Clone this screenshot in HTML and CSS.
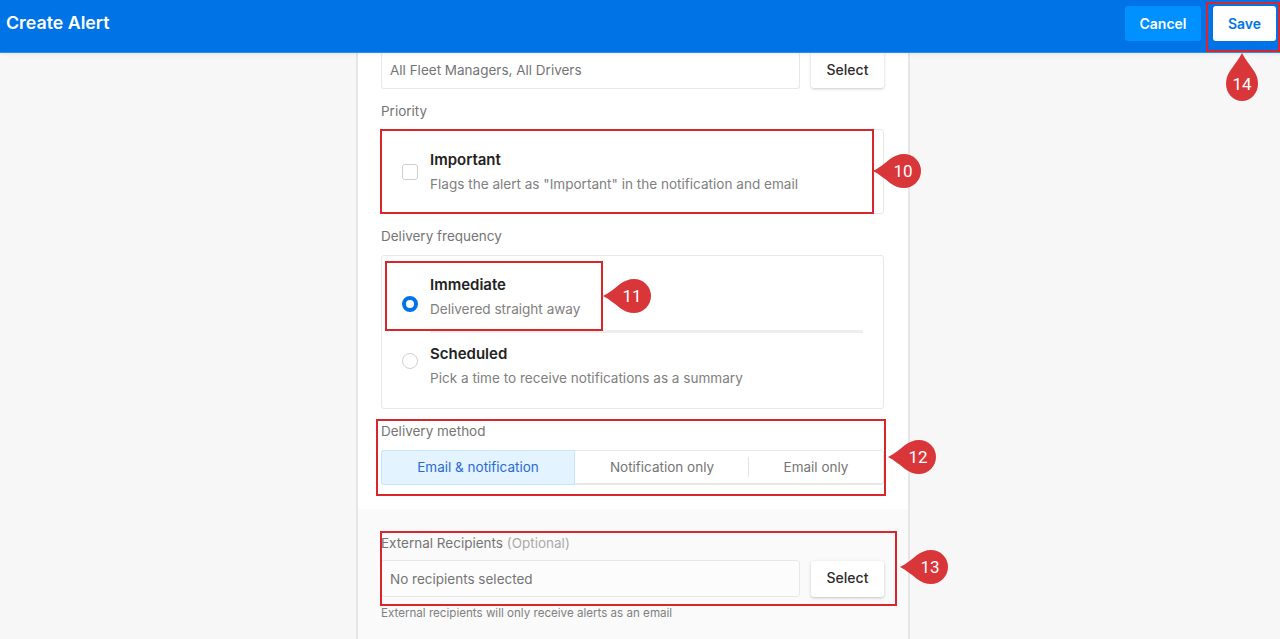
FILE: index.html
```html
<!DOCTYPE html>
<html lang="en">
<head>
<meta charset="utf-8">
<title>Create Alert</title>
<link rel="stylesheet" href="styles.css">
</head>
<body>
<header class="topbar">
  <h1 class="topbar-title">Create Alert</h1>
  <div class="topbar-actions">
    <button class="btn-cancel">Cancel</button>
    <button class="btn-save">Save</button>
  </div>
</header>
<main class="page">
  <div class="panel">
    <section class="panel-main">
      <div class="picker picker-cut">
        <div class="picker-value">All Fleet Managers, All Drivers</div>
        <button class="btn-select">Select</button>
      </div>
      <div class="label label-priority">Priority</div>
      <div class="card card-priority">
        <div class="option">
          <span class="checkbox"></span>
          <div>
            <div class="option-title">Important</div>
            <div class="option-desc">Flags the alert as "Important" in the notification and email</div>
          </div>
        </div>
      </div>
      <div class="label label-frequency">Delivery frequency</div>
      <div class="card card-frequency">
        <div class="option option-immediate">
          <span class="radio radio-on"></span>
          <div>
            <div class="option-title">Immediate</div>
            <div class="option-desc">Delivered straight away</div>
          </div>
        </div>
        <div class="rule"></div>
        <div class="option option-scheduled">
          <span class="radio"></span>
          <div>
            <div class="option-title">Scheduled</div>
            <div class="option-desc">Pick a time to receive notifications as a summary</div>
          </div>
        </div>
      </div>
      <div class="label label-method">Delivery method</div>
      <div class="segments">
        <div class="segment segment-active">Email &amp; notification</div>
        <div class="segment segment-notif">Notification only</div>
        <div class="segment segment-email">Email only</div>
      </div>
    </section>
    <section class="panel-external">
      <div class="label label-external">External Recipients <span class="optional">(Optional)</span></div>
      <div class="picker">
        <div class="picker-value picker-empty">No recipients selected</div>
        <button class="btn-select">Select</button>
      </div>
      <p class="help">External recipients will only receive alerts as an email</p>
    </section>
  </div>
</main>

<div class="mark mark-10"></div>
<div class="mark mark-11"></div>
<div class="mark mark-12"></div>
<div class="mark mark-13"></div>
<div class="mark mark-14"></div>

<svg class="pin pin-10" viewBox="0 0 48 34"><path d="M0 17C6 14 12 9 17 5C21 2 26 0 31 0A17 17 0 0 1 31 34C26 34 21 32 17 29C12 25 6 20 0 17Z"/><text x="30" y="23">10</text></svg>
<svg class="pin pin-11" viewBox="0 0 48 34"><path d="M0 17C6 14 12 9 17 5C21 2 26 0 31 0A17 17 0 0 1 31 34C26 34 21 32 17 29C12 25 6 20 0 17Z"/><text x="29" y="23">11</text></svg>
<svg class="pin pin-12" viewBox="0 0 48 34"><path d="M0 17C6 14 12 9 17 5C21 2 26 0 31 0A17 17 0 0 1 31 34C26 34 21 32 17 29C12 25 6 20 0 17Z"/><text x="30" y="23">12</text></svg>
<svg class="pin pin-13" viewBox="0 0 48 34"><path d="M0 17C6 14 12 9 17 5C21 2 26 0 31 0A17 17 0 0 1 31 34C26 34 21 32 17 29C12 25 6 20 0 17Z"/><text x="30" y="23">13</text></svg>
<svg class="pin pin-14" viewBox="0 0 34 48"><path d="M17 0C20 6 25 12 29 18C32 22 33 27 33 31A16 17 0 0 1 1 31C1 27 2 22 5 18C9 12 14 6 17 0Z"/><text x="17" y="37">14</text></svg>
</body>
</html>
```
FILE: styles.css
```css
* { box-sizing: border-box; }

html, body {
  margin: 0;
  height: 100%;
  overflow: hidden;
}

body {
  position: relative;
  background: #f7f7f7;
  font-family: Inter, "Liberation Sans", sans-serif;
  font-size: 13.5px;
  color: #757575;
}

button {
  font-family: inherit;
  cursor: pointer;
}

.topbar {
  position: relative;
  z-index: 2;
  height: 53px;
  padding: 6px 4px 0 6px;
  display: flex;
  justify-content: space-between;
  align-items: flex-start;
  background: #0074e6;
  border-bottom: 1px solid #2b8cec;
  box-shadow: 0 1px 4px rgba(0, 0, 0, 0.08);
}

.topbar-title {
  margin: 6px 0 0;
  font-size: 17.8px;
  line-height: 22px;
  font-weight: 600;
  color: #fff;
}

.topbar-actions {
  display: flex;
  gap: 12px;
}

.btn-cancel,
.btn-save {
  height: 35px;
  border: 0;
  border-radius: 3px;
  font-size: 14px;
  font-weight: 600;
}

.btn-cancel {
  width: 76px;
  background: #0090ff;
  color: #fff;
}

.btn-save {
  width: 63px;
  background: #fff;
  color: #0074e6;
}

.page {
  display: flex;
  justify-content: center;
  padding-right: 14px;
  height: 586px;
}

.panel {
  width: 554px;
  height: 586px;
  display: flex;
  flex-direction: column;
  background: #fff;
  border-left: 2px solid #e6e6e6;
  border-right: 2px solid #e6e6e6;
}

.panel-main {
  height: 456px;
  padding: 0 24px 0 23px;
}

.panel-external {
  flex: 1;
  padding: 25px 24px 0 23px;
  background: #fafafa;
}

.picker {
  display: flex;
  justify-content: space-between;
  align-items: center;
  height: 37px;
}

.picker-cut {
  margin-top: -1px;
  align-items: flex-start;
}

.picker-value {
  width: 419px;
  height: 100%;
  padding-left: 8px;
  display: flex;
  align-items: center;
  background: #fff;
  border: 1px solid #e8e8e8;
  border-radius: 3px;
}

.picker-cut .picker-value {
  padding-bottom: 1px;
  border-top: 0;
}

.picker-empty {
  background: #fcfcfc;
}

.btn-select {
  width: 73px;
  height: 36px;
  padding: 0 0 2px;
  background: #fff;
  border: 0;
  border-radius: 3px;
  box-shadow: 0 1px 3px rgba(0, 0, 0, 0.22);
  font-size: 14px;
  font-weight: 500;
  color: #2c2c2c;
}

.label {
  line-height: 18px;
}

.label-priority { margin-top: 13px; }
.label-frequency { margin-top: 13px; }
.label-method { margin-top: 13px; }
.label-external { margin-bottom: 8px; }

.optional {
  color: #aaa;
}

.card {
  background: #fff;
  border: 1px solid #e8e8e8;
  border-radius: 3px;
}

.card-priority {
  height: 85px;
  margin-top: 9px;
}

.card-priority .option {
  padding-top: 18px;
}

.card-frequency {
  height: 154px;
  margin-top: 10px;
}

.option {
  display: flex;
  align-items: center;
  gap: 12px;
  padding-left: 20px;
}

.option-immediate {
  padding-top: 17px;
}

.option-scheduled {
  padding-top: 9px;
}

.option-title {
  line-height: 24px;
  font-size: 15px;
  font-weight: 600;
  color: #222;
}

.option-desc {
  line-height: 24px;
  font-size: 13.57px;
  color: #808080;
}

.checkbox {
  width: 16px;
  height: 16px;
  background: #fff;
  border: 1px solid #cfcfcf;
  border-radius: 3px;
}

.radio {
  width: 16px;
  height: 16px;
  margin-bottom: 10px;
  border: 1px solid #cfcfcf;
  border-radius: 50%;
}

.radio-on {
  margin-top: 13px;
  margin-bottom: 0;
  border: 4px solid #0074e6;
}

.rule {
  height: 3px;
  margin: 9px 20px 0 48px;
  background: #eeeeee;
}

.segments {
  display: flex;
  height: 35px;
  margin-top: 10px;
  background: #fff;
  border: 1px solid #e8e8e8;
  border-bottom-width: 2px;
  border-radius: 3px;
}

.segment {
  display: flex;
  align-items: center;
  justify-content: center;
}

.segment-active {
  width: 194px;
  margin: -1px 0 -2px -1px;
  padding-bottom: 1px;
  background: #e3f3ff;
  border: 1px solid #c6e6fc;
  border-radius: 3px 0 0 3px;
  color: #2a6bd0;
}

.segment-notif {
  width: 174px;
  position: relative;
}

.segment-notif::after {
  content: "";
  position: absolute;
  right: 0;
  top: 6px;
  height: 20px;
  border-right: 1px solid #e4e4e4;
}

.segment-email {
  flex: 1;
}

.help {
  margin: 9px 0 0;
  font-size: 11.6px;
  line-height: 14px;
  color: #808080;
}

.mark {
  position: absolute;
  z-index: 3;
  border: 2px solid #d8262c;
  pointer-events: none;
}

.mark-10 { left: 380px; top: 129px; width: 494px; height: 85px; }
.mark-11 { left: 385px; top: 261px; width: 218px; height: 70px; }
.mark-12 { left: 376px; top: 419px; width: 510px; height: 77px; }
.mark-13 { left: 380px; top: 531px; width: 517px; height: 75px; }
.mark-14 { left: 1206px; top: 2px; width: 74px; height: 50px; }

.pin {
  position: absolute;
  z-index: 4;
  width: 48px;
  height: 34px;
}

.pin path {
  fill: #d9363a;
}

.pin text {
  fill: #fff;
  font-family: Roboto, "Liberation Sans", sans-serif;
  font-size: 17px;
  text-anchor: middle;
}

.pin-10 { left: 873px; top: 154px; }
.pin-11 { left: 603px; top: 279px; }
.pin-12 { left: 888px; top: 440px; }
.pin-13 { left: 900px; top: 550px; }
.pin-14 { left: 1225px; top: 53px; width: 34px; height: 48px; }
```
